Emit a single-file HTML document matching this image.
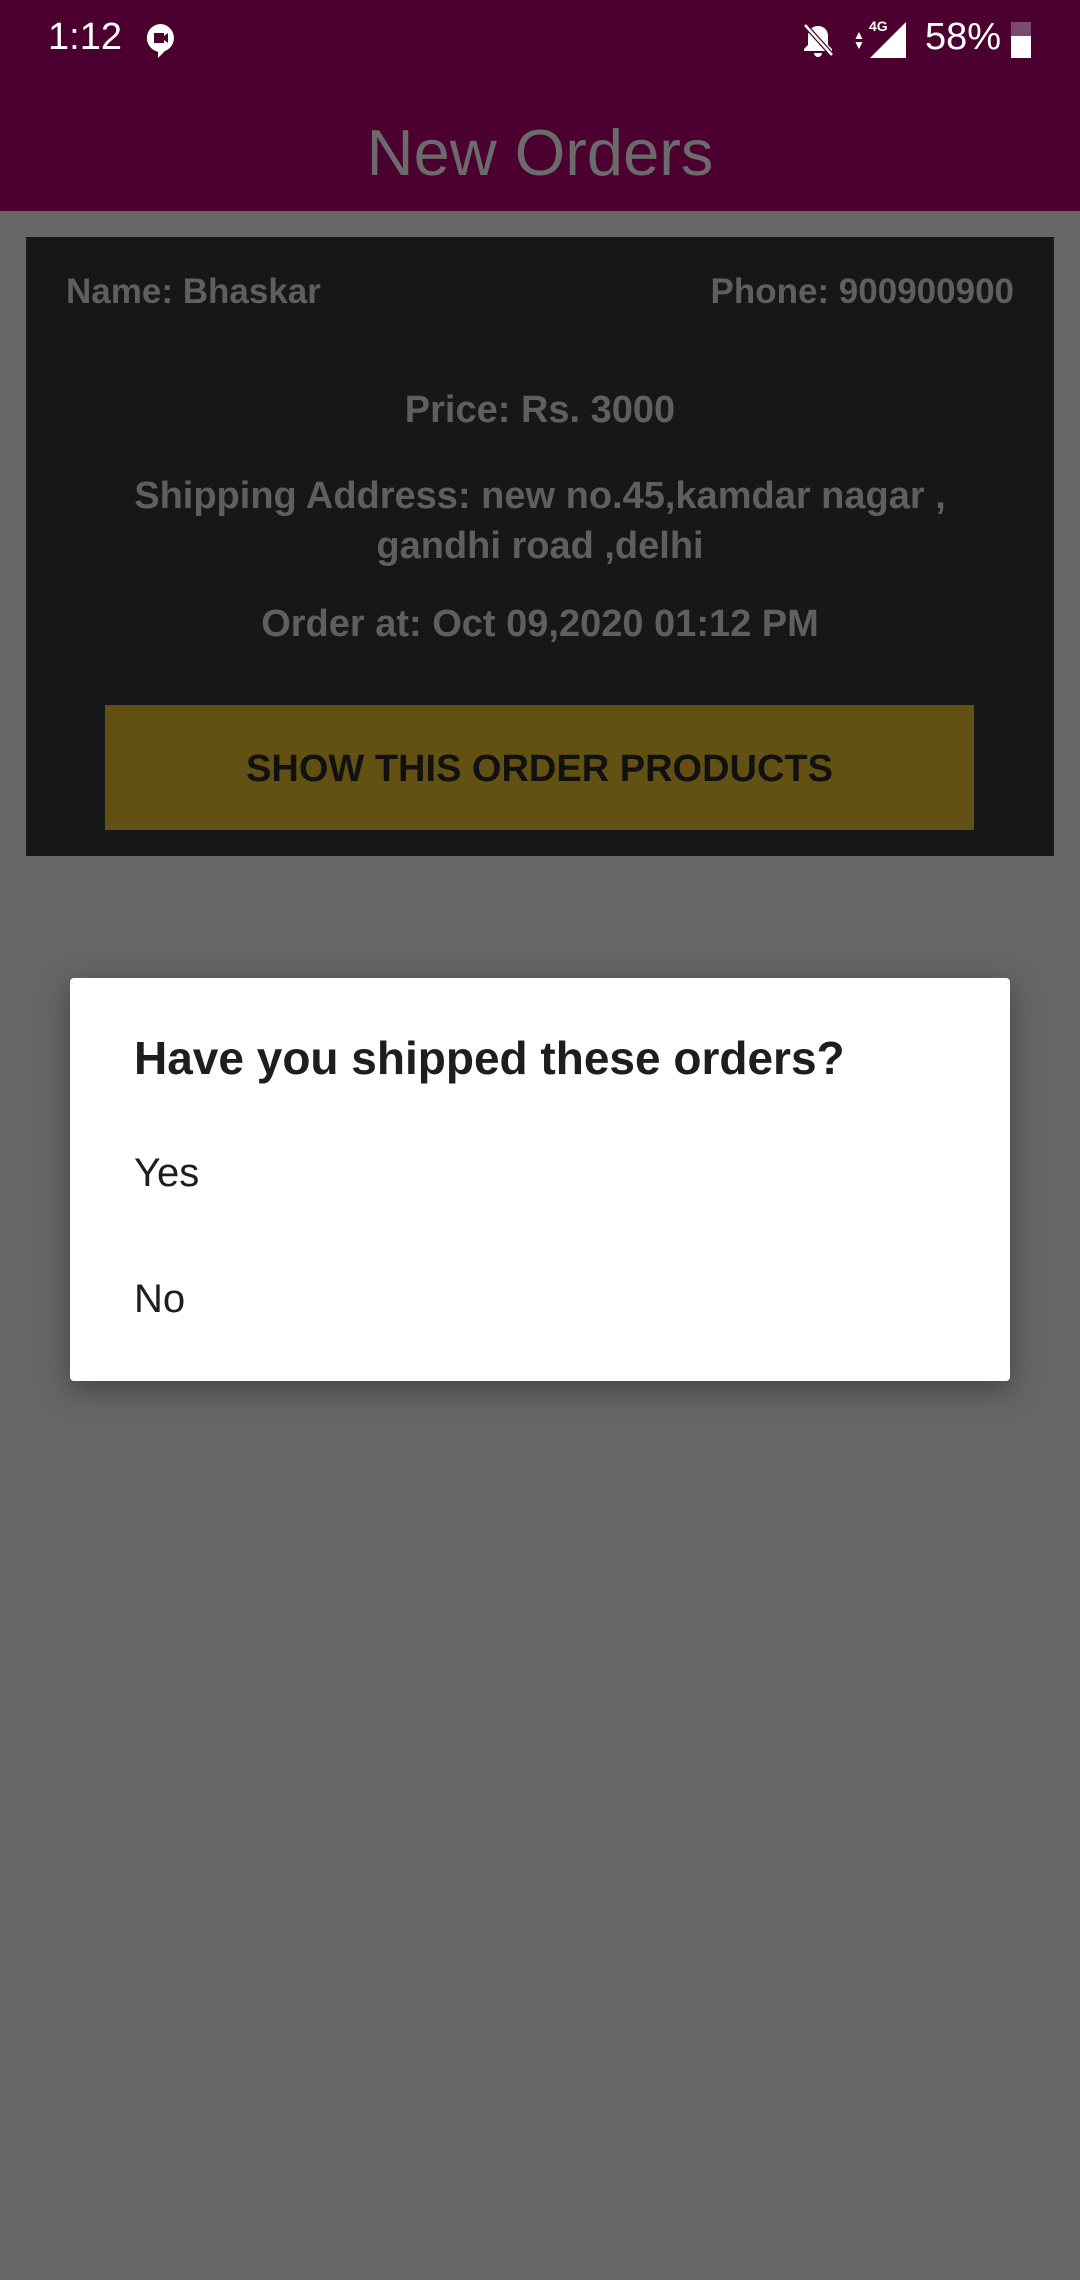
<!DOCTYPE html>
<html><head><meta charset="utf-8"><style>
body{margin:0;width:1080px;height:2280px;background:#666666;font-family:"Liberation Sans",sans-serif;position:relative;overflow:hidden}
.hdr{position:absolute;left:0;top:0;width:1080px;height:211px;background:#4b0030}
.st{position:absolute;color:#fff;font-size:38px;top:18px}
.title{position:absolute;width:100%;text-align:center;color:#6b6b6b;font-size:65px;line-height:80px;top:113px}
.card{position:absolute;left:26px;top:237px;width:1028px;height:619px;background:#161719}
.t{position:absolute;color:#5f5f5f;font-weight:bold;font-size:35px;white-space:nowrap}
.c{left:0;width:1028px;text-align:center}
.btn{position:absolute;left:79px;top:468px;width:869px;height:125px;background:#635113;color:#111;font-weight:bold;font-size:38px;text-align:center;line-height:128px}
.dlg{position:absolute;left:70px;top:978px;width:940px;height:403px;background:#fff;border-radius:4px;box-shadow:0 8px 30px rgba(0,0,0,.35)}
.d{position:absolute;left:64px;color:#1e1e1e;font-size:40px;white-space:nowrap}
</style></head><body>
<div class="hdr">
<div class="st" style="left:48px;top:16px">1:12</div>
<svg style="position:absolute;left:146px;top:23px" width="30" height="36" viewBox="0 0 30 36"><path d="M15 1a14 14 0 0 0-3 27.7V35l7-7A14 14 0 0 0 15 1z" fill="#fff"/><rect x="8" y="10" width="10" height="10" fill="#4b0030"/><path d="M18 13l4-3v10l-4-3z" fill="#4b0030"/></svg>
<svg style="position:absolute;left:800px;top:22px" width="36" height="36" viewBox="0 0 36 36"><path d="M18 4c-6 0-10 4-10 10v9l-4 4v2h28v-2l-4-4v-9c0-6-4-10-10-10zM14 31h8a4 4 0 0 1-8 0z" fill="#fff"/><path d="M5 3l27 30" stroke="#4b0030" stroke-width="5"/><path d="M5 3l27 30" stroke="#fff" stroke-width="2.5"/></svg>
<div style="position:absolute;left:853px;top:30px;color:#fff;font-size:12px;line-height:10px">▲<br>▼</div>
<div style="position:absolute;left:869px;top:18px;color:#fff;font-size:14px;font-weight:bold">4G</div>
<svg style="position:absolute;left:870px;top:22px" width="36" height="36"><path d="M36 0V36H0z" fill="#fff"/></svg>
<div class="st" style="left:925px;top:16px">58%</div>
<div style="position:absolute;left:1011px;top:22px;width:20px;height:36px;background:#fff"></div>
<div style="position:absolute;left:1011px;top:22px;width:20px;height:14px;background:#7c4a6c"></div>
<div class="title">New Orders</div>
</div>
<div class="card">
<div class="t" style="left:40px;top:35px">Name: Bhaskar</div>
<div class="t" style="right:40px;top:35px">Phone: 900900900</div>
<div class="t c" style="top:152px;font-size:38px">Price: Rs. 3000</div>
<div class="t c" style="top:234px;font-size:38px;line-height:50px">Shipping Address: new no.45,kamdar nagar ,<br>gandhi road ,delhi</div>
<div class="t c" style="top:366px;font-size:38px">Order at: Oct 09,2020 01:12 PM</div>
<div class="btn">SHOW THIS ORDER PRODUCTS</div>
</div>
<div class="dlg">
<div class="d" style="top:53px;font-weight:bold;font-size:46px">Have you shipped these orders?</div>
<div class="d" style="top:173px">Yes</div>
<div class="d" style="top:299px">No</div>
</div>
</body></html>
